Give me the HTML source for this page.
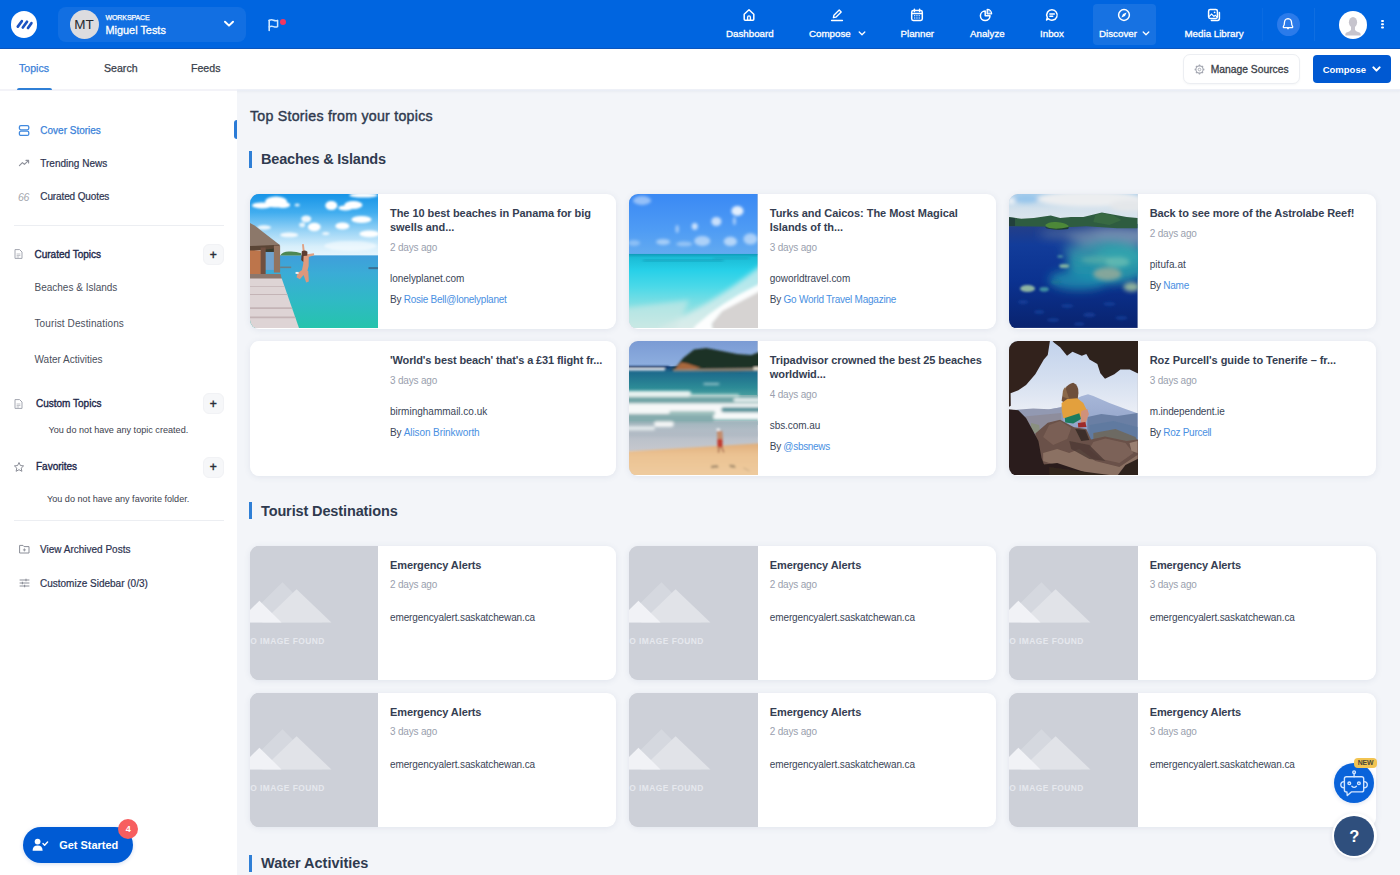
<!DOCTYPE html>
<html><head><meta charset="utf-8"><title>Discover</title>
<style>
*{box-sizing:border-box;margin:0;padding:0}
html,body{width:1400px;height:875px;overflow:hidden}
body{font-family:"Liberation Sans",sans-serif;background:#f3f5f9;color:#3a4557;position:relative;font-size:11px}
.abs{position:absolute}
#hdr{position:absolute;left:0;top:0;width:1400px;height:49px;background:#0065e0;border-bottom:1px solid #0a56bf}
#sub{position:absolute;left:0;top:49px;width:1400px;height:41px;background:#fff;box-shadow:0 1px 3px rgba(60,80,120,.10)}
#side{position:absolute;left:0;top:90px;width:237px;height:785px;background:#fff}
.t{position:absolute;white-space:nowrap;line-height:1}
.nav{color:#fff;font-size:9.75px;font-weight:normal;-webkit-text-stroke:.3px #fff}
.card{position:absolute;width:366.9px;height:134.3px;background:#fff;border-radius:9px;box-shadow:0 1px 6px rgba(70,90,130,.10);overflow:hidden}
.card .img{position:absolute;left:0;top:0;width:128.5px;height:133.9px;background:#cdd0d8;overflow:hidden}
.card .ti{position:absolute;left:140.4px;top:11.55px;white-space:nowrap;font-size:11px;letter-spacing:-.06px;font-weight:bold;line-height:14.3px;color:#353e52}
.card .ago{position:absolute;left:140.4px;letter-spacing:-.19px;font-size:10px;color:#9a9fae;line-height:1}
.card .dom{position:absolute;left:140.4px;letter-spacing:-.07px;font-size:10px;color:#3a4557;line-height:1}
.card .by{position:absolute;left:140.4px;letter-spacing:-.2px;font-size:10px;color:#3a4557;line-height:1}
.card .by a{color:#4a90e2;text-decoration:none}
.sec{position:absolute;left:249px;width:3px;height:17px;background:#2f7fd6}
.sect{position:absolute;left:261px;letter-spacing:-.16px;font-size:14.5px;font-weight:bold;color:#2f3a4f;line-height:1;white-space:nowrap}
.sb{position:absolute;white-space:nowrap;line-height:1;font-size:10.5px;color:#3a4557}
</style></head><body>
<div id="hdr"></div>
<div id="sub"></div>
<div id="side"></div>
<div id="subline" style="position:absolute;left:0;top:88.8px;width:237px;height:2.2px;background:#f3f3f8"></div><div style="position:absolute;left:237px;top:88.8px;width:1163px;height:2.4px;background:linear-gradient(#f0f2f8,#e8ecf5)"></div>
<!--HDR-->
<!-- logo -->
<div class="abs" style="left:10.5px;top:11px;width:26.5px;height:26.5px;border-radius:50%;background:#fff"></div>
<svg class="abs" style="left:10.5px;top:11px" width="26.5" height="26.5" viewBox="0 0 26.5 26.5"><g stroke="#1b52c2" stroke-width="2.7" stroke-linecap="round"><line x1="6.8" y1="15.6" x2="10.8" y2="10.2"/><line x1="11.8" y1="16.5" x2="16" y2="10.8"/><line x1="17" y1="17" x2="20.4" y2="12.2"/></g></svg>
<!-- workspace -->
<div class="abs" style="left:58px;top:7px;width:188px;height:35px;border-radius:8px;background:rgba(255,255,255,.07)"></div>
<div class="abs" style="left:69.5px;top:10px;width:29px;height:29px;border-radius:50%;background:#dcdcdf"></div>
<div class="t" style="left:69.5px;top:17.5px;width:29px;text-align:center;font-size:13.5px;color:#26292f">MT</div>
<div class="t" style="left:105.5px;top:13.5px;font-size:7px;color:#fff;letter-spacing:-.1px;-webkit-text-stroke:.25px #fff">WORKSPACE</div>
<div class="t" style="left:105.5px;top:25px;font-size:10.9px;color:#fff;-webkit-text-stroke:.3px #fff">Miguel Tests</div>
<svg class="abs" style="left:223px;top:20px" width="12" height="8" viewBox="0 0 12 8"><path d="M2 1.7 L6 5.6 L10 1.7" fill="none" stroke="#fff" stroke-width="2" stroke-linecap="round" stroke-linejoin="round"/></svg>
<!-- flag -->
<svg class="abs" style="left:267px;top:18px" width="14" height="14" viewBox="0 0 14 14"><path d="M2.2 2.2 V12.4" stroke="#cfe7ff" stroke-width="1.6" stroke-linecap="round" fill="none"/><path d="M2.2 2.4 Q4.4 1.3 6.6 2.3 Q8.8 3.3 10.6 2.4 V8.6 Q8.8 9.6 6.6 8.6 Q4.4 7.6 2.2 8.8" fill="none" stroke="#cfe7ff" stroke-width="1.5" stroke-linejoin="round" stroke-linecap="round"/></svg>
<div class="abs" style="left:280.1px;top:19.2px;width:6.2px;height:6.2px;border-radius:50%;background:#f4365f"></div>
<!-- nav highlight -->
<div class="abs" style="left:1092.5px;top:4px;width:63.5px;height:41px;border-radius:4px;background:rgba(255,255,255,.09)"></div>
<!-- nav labels -->
<div class="t nav" style="left:726px;top:29.3px">Dashboard</div>
<div class="t nav" style="left:809px;top:29.3px">Compose</div>
<div class="t nav" style="left:900.5px;top:29.3px">Planner</div>
<div class="t nav" style="left:970px;top:29.3px">Analyze</div>
<div class="t nav" style="left:1040px;top:29.3px">Inbox</div>
<div class="t nav" style="left:1099px;top:29.3px">Discover</div>
<div class="t nav" style="left:1184.5px;top:29.3px">Media Library</div>
<svg class="abs" style="left:858.2px;top:31.4px" width="8" height="5" viewBox="0 0 8 5"><path d="M1.2 1 L4 3.7 L6.8 1" fill="none" stroke="#fff" stroke-width="1.3" stroke-linecap="round" stroke-linejoin="round"/></svg>
<svg class="abs" style="left:1142.2px;top:31.4px" width="8" height="5" viewBox="0 0 8 5"><path d="M1.2 1 L4 3.7 L6.8 1" fill="none" stroke="#fff" stroke-width="1.3" stroke-linecap="round" stroke-linejoin="round"/></svg>
<!-- nav icons -->
<svg class="abs" style="left:742px;top:8px" width="14" height="14" viewBox="0 0 14 14"><path d="M2.2 6.2 L7 1.8 L11.8 6.2 V11.2 Q11.8 12.2 10.8 12.2 H3.2 Q2.2 12.2 2.2 11.2 Z" fill="none" stroke="#fff" stroke-width="1.5" stroke-linejoin="round"/><path d="M5.6 12 V9.2 Q5.6 7.9 7 7.9 Q8.4 7.9 8.4 9.2 V12" fill="none" stroke="#fff" stroke-width="1.35"/></svg>
<svg class="abs" style="left:830px;top:8px" width="14" height="14" viewBox="0 0 14 14"><path d="M3.4 9.6 L3.9 7.2 L9.2 1.9 L11.2 3.9 L5.9 9.2 Z" fill="none" stroke="#fff" stroke-width="1.35" stroke-linejoin="round"/><path d="M1.6 12.4 H12.4" stroke="#fff" stroke-width="1.5" stroke-linecap="round"/></svg>
<svg class="abs" style="left:910px;top:8px" width="14" height="14" viewBox="0 0 14 14"><rect x="1.7" y="2.6" width="10.6" height="9.8" rx="1.6" fill="none" stroke="#fff" stroke-width="1.5"/><path d="M4.4 1.2 V3.6 M9.6 1.2 V3.6 M1.8 5.6 H12.2" stroke="#fff" stroke-width="1.5" stroke-linecap="round"/><path d="M4 7.8 H10 M4 10 H10" stroke="#fff" stroke-width="1.1" stroke-dasharray="1.3 1"/></svg>
<svg class="abs" style="left:979px;top:8px" width="14" height="14" viewBox="0 0 14 14"><path d="M6.2 3 A4.8 4.8 0 1 0 11 7.8 H6.2 Z" fill="none" stroke="#fff" stroke-width="1.5" stroke-linejoin="round"/><path d="M8.2 1.4 A4.4 4.4 0 0 1 12.6 5.8 H8.2 Z" fill="#fff" fill-opacity=".35" stroke="#fff" stroke-width="1.35" stroke-linejoin="round"/></svg>
<svg class="abs" style="left:1044.5px;top:8px" width="14" height="14" viewBox="0 0 14 14"><path d="M7 1.8 A5.2 5.2 0 1 1 3.4 10.8 L1.6 12 L2.3 9.4 A5.2 5.2 0 0 1 7 1.8 Z" fill="none" stroke="#fff" stroke-width="1.5" stroke-linejoin="round"/><path d="M4.8 6 H9.4 M4.8 8.2 H7.8" stroke="#fff" stroke-width="1.35" stroke-linecap="round"/></svg>
<svg class="abs" style="left:1116.5px;top:8px" width="14" height="14" viewBox="0 0 14 14"><circle cx="7" cy="7" r="5.4" fill="none" stroke="#fff" stroke-width="1.5"/><path d="M9.6 4.4 L8 8 L4.4 9.6 L6 6 Z" fill="#fff"/></svg>
<svg class="abs" style="left:1207px;top:8px" width="14" height="14" viewBox="0 0 14 14"><rect x="1.6" y="1.6" width="8.8" height="8.8" rx="1.6" fill="none" stroke="#fff" stroke-width="1.5"/><path d="M12.4 4.4 V10.6 Q12.4 12.4 10.6 12.4 H4.4" fill="none" stroke="#fff" stroke-width="1.5" stroke-linecap="round"/><path d="M2 8.6 L4.6 6 L7 8.4 L8.2 7.2 L10 9" fill="none" stroke="#fff" stroke-width="1.1"/><circle cx="7.6" cy="4.3" r=".9" fill="#fff"/></svg>
<!-- dividers -->
<div class="abs" style="left:1262px;top:8px;width:1px;height:33px;background:rgba(255,255,255,.04)"></div>
<div class="abs" style="left:1313.5px;top:8px;width:1px;height:33px;background:rgba(255,255,255,.06)"></div>
<!-- bell -->
<div class="abs" style="left:1276.5px;top:12.5px;width:23px;height:23px;border-radius:50%;background:#2b7bea"></div>
<svg class="abs" style="left:1281px;top:17px" width="14" height="14" viewBox="0 0 14 14"><path d="M7 1.6 Q10.6 1.8 10.6 6 Q10.6 8.4 11.6 9.4 Q12 10.6 10.8 10.6 H3.2 Q2 10.6 2.4 9.4 Q3.4 8.4 3.4 6 Q3.4 1.8 7 1.6 Z" fill="none" stroke="#fff" stroke-width="1.3" stroke-linejoin="round"/><path d="M6 11 L7 12.2 L8 11" fill="#fff" stroke="#fff" stroke-width=".8" stroke-linejoin="round"/></svg>
<!-- avatar -->
<div class="abs" style="left:1338.5px;top:10.5px;width:28px;height:28px;border-radius:50%;background:#fff;overflow:hidden"><svg width="28" height="28" viewBox="0 0 28 28"><ellipse cx="14" cy="11.2" rx="4.1" ry="5.2" fill="#c6c4cd"/><path d="M12 14 H16 V19 Q17 20.4 21 21.8 Q22 23 21.6 24.6 H6.4 Q6 23 7 21.8 Q11 20.4 12 19 Z" fill="#c6c4cd"/></svg></div>
<!-- kebab -->
<div class="abs" style="left:1381.3px;top:20px;width:2.4px;height:2.4px;border-radius:50%;background:#fff;box-shadow:0 3.3px 0 #fff,0 6.6px 0 #fff"></div>
<!--/HDR-->
<!--SUB-->
<div class="t" style="left:19px;top:62.8px;font-size:10.6px;color:#3b82d9;-webkit-text-stroke:.25px #3b82d9">Topics</div>
<div class="t" style="left:104px;top:62.8px;font-size:10.6px;color:#3a3f4c;-webkit-text-stroke:.25px #3a3f4c">Search</div>
<div class="t" style="left:191px;top:62.8px;font-size:10.6px;color:#3a3f4c;-webkit-text-stroke:.25px #3a3f4c">Feeds</div>
<div class="abs" style="left:17px;top:87.6px;width:35px;height:2.3px;border-radius:2px 2px 0 0;background:#2f7fd6"></div>
<!-- manage sources -->
<div class="abs" style="left:1182.5px;top:54px;width:117.5px;height:29.5px;border:1px solid #eceef2;border-radius:7px;background:#fff;box-shadow:0 1px 2px rgba(80,90,120,.05)"></div>
<svg class="abs" style="left:1194.4px;top:63.6px" width="11" height="11" viewBox="0 0 11 11"><circle cx="5.5" cy="5.5" r="3.6" fill="none" stroke="#a5a8b2" stroke-width="1.1"/><circle cx="5.5" cy="5.5" r="1.3" fill="none" stroke="#a5a8b2" stroke-width=".9"/><g stroke="#a5a8b2" stroke-width="1.3"><path d="M5.5 .6V2 M5.5 9V10.4 M.6 5.5H2 M9 5.5H10.4 M2 2L3 3 M8 8L9 9 M2 9L3 8 M8 3L9 2"/></g></svg>
<div class="t" style="left:1210.8px;top:64.7px;font-size:10.3px;color:#3a3e48;-webkit-text-stroke:.3px #3a3e48">Manage Sources</div>
<!-- compose btn -->
<div class="abs" style="left:1312.6px;top:55.2px;width:78px;height:28px;border-radius:4px;background:#0059d2"></div>
<div class="t" style="left:1322.7px;top:64.9px;font-size:9.5px;color:#fff;font-weight:bold">Compose</div>
<svg class="abs" style="left:1372.2px;top:66.2px" width="9" height="6.5" viewBox="0 0 9 6.5"><path d="M1.4 1.4 L4.5 4.6 L7.6 1.4" fill="none" stroke="#fff" stroke-width="2" stroke-linecap="round" stroke-linejoin="round"/></svg>
<!--/SUB-->
<!--SIDE-->
<!-- active bar -->
<div class="abs" style="left:234.2px;top:119.8px;width:2.9px;height:19.2px;border-radius:3px 0 0 3px;background:#2a7bd6"></div>
<!-- cover stories -->
<svg class="abs" style="left:17.5px;top:124px" width="13" height="13" viewBox="0 0 13 13"><rect x="1.4" y="1.6" width="9.4" height="4.2" rx="1.5" fill="none" stroke="#4189de" stroke-width="1.3"/><rect x="1.4" y="7.2" width="9.4" height="4.2" rx="1.5" fill="none" stroke="#4189de" stroke-width="1.3"/></svg>
<div class="sb" style="left:40.3px;top:125.5px;font-size:10px;color:#3b82d9;-webkit-text-stroke:.25px #3b82d9">Cover Stories</div>
<!-- trending -->
<svg class="abs" style="left:17.5px;top:157px" width="13" height="13" viewBox="0 0 13 13"><path d="M1.4 8.6 L4.4 5.6 L6.4 7.4 L10.4 3.6" fill="none" stroke="#8b8e98" stroke-width="1.1" stroke-linecap="round" stroke-linejoin="round"/><path d="M8 3.4 H10.6 V6" fill="none" stroke="#8b8e98" stroke-width="1.1" stroke-linecap="round" stroke-linejoin="round"/></svg>
<div class="sb" style="left:40.3px;top:159px;font-size:10px;color:#2d3350;-webkit-text-stroke:.2px #2d3350">Trending News</div>
<!-- quotes -->
<div class="sb" style="left:18px;top:191.5px;font-size:10.5px;color:#a4a6ad;letter-spacing:-.4px;font-style:italic">66</div>
<div class="sb" style="left:40.3px;top:191.9px;font-size:10px;letter-spacing:-.12px;color:#2d3350;-webkit-text-stroke:.2px #2d3350">Curated Quotes</div>
<div class="abs" style="left:14px;top:224.5px;width:210px;height:1px;background:#eceef2"></div>
<!-- curated topics -->
<svg class="abs" style="left:13px;top:248px" width="11" height="12" viewBox="0 0 11 12"><path d="M2 1.6 H6.6 L9 4 V10.4 H2 Z" fill="none" stroke="#a3a6b0" stroke-width="1" stroke-linejoin="round"/><path d="M3.6 6 H7.4 M3.6 7.6 H7.4 M3.6 9 H6" stroke="#a3a6b0" stroke-width=".7"/></svg>
<div class="sb" style="left:34.5px;top:250px;font-size:10px;color:#1d274a;-webkit-text-stroke:.35px #1d274a">Curated Topics</div>
<div class="abs" style="left:202.5px;top:244px;width:21.5px;height:21px;border-radius:6px;background:#f6f7f9;border:1px solid #f1f2f5"></div>
<div class="sb" style="left:202.5px;top:248.5px;width:21.5px;text-align:center;font-size:12px;color:#2a2e3a;-webkit-text-stroke:.45px #2a2e3a">+</div>
<div class="sb" style="left:34.5px;top:282.5px;font-size:10px;color:#4b4f5c">Beaches &amp; Islands</div>
<div class="sb" style="left:34.5px;top:318.5px;font-size:10px;letter-spacing:.11px;color:#4b4f5c">Tourist Destinations</div>
<div class="sb" style="left:34.5px;top:355px;font-size:10px;color:#4b4f5c">Water Activities</div>
<!-- custom topics -->
<svg class="abs" style="left:13px;top:397.5px" width="11" height="12" viewBox="0 0 11 12"><path d="M2 1.6 H6.6 L9 4 V10.4 H2 Z" fill="none" stroke="#a3a6b0" stroke-width="1" stroke-linejoin="round"/><path d="M3.6 6 H7.4 M3.6 7.6 H7.4 M3.6 9 H6" stroke="#a3a6b0" stroke-width=".7"/></svg>
<div class="sb" style="left:36px;top:398.7px;font-size:10px;color:#1d274a;-webkit-text-stroke:.35px #1d274a">Custom Topics</div>
<div class="abs" style="left:202.5px;top:393px;width:21.5px;height:21px;border-radius:6px;background:#f6f7f9;border:1px solid #f1f2f5"></div>
<div class="sb" style="left:202.5px;top:397.5px;width:21.5px;text-align:center;font-size:12px;color:#2a2e3a;-webkit-text-stroke:.45px #2a2e3a">+</div>
<div class="sb" style="left:48.5px;top:425.5px;font-size:9.1px;color:#3d414d">You do not have any topic created.</div>
<!-- favorites -->
<svg class="abs" style="left:12.5px;top:460.5px" width="12" height="12" viewBox="0 0 12 12"><path d="M6 1.5 L7.4 4.5 L10.6 4.9 L8.2 7.1 L8.9 10.3 L6 8.7 L3.1 10.3 L3.8 7.1 L1.4 4.9 L4.6 4.5 Z" fill="none" stroke="#8b8e98" stroke-width="1" stroke-linejoin="round"/></svg>
<div class="sb" style="left:36px;top:462px;font-size:10px;color:#1d274a;-webkit-text-stroke:.35px #1d274a">Favorites</div>
<div class="abs" style="left:202.5px;top:456.5px;width:21.5px;height:21px;border-radius:6px;background:#f6f7f9;border:1px solid #f1f2f5"></div>
<div class="sb" style="left:202.5px;top:461px;width:21.5px;text-align:center;font-size:12px;color:#2a2e3a;-webkit-text-stroke:.45px #2a2e3a">+</div>
<div class="sb" style="left:47px;top:495px;font-size:9.1px;color:#3d414d">You do not have any favorite folder.</div>
<div class="abs" style="left:14px;top:519.5px;width:210px;height:1px;background:#eceef2"></div>
<!-- archived -->
<svg class="abs" style="left:17.5px;top:543px" width="13" height="12" viewBox="0 0 13 12"><path d="M1.6 2.4 H5 L6 3.6 H11 V10 H1.6 Z" fill="none" stroke="#8b8e98" stroke-width="1" stroke-linejoin="round"/><path d="M6.4 5.4 V8.4 M4.9 6.9 H7.9" stroke="#8b8e98" stroke-width=".9"/></svg>
<div class="sb" style="left:40px;top:544.7px;font-size:10px;color:#2d3350;-webkit-text-stroke:.2px #2d3350">View Archived Posts</div>
<svg class="abs" style="left:17.5px;top:577px" width="13" height="12" viewBox="0 0 13 12"><path d="M1.6 3 H11.4 M1.6 6 H11.4 M1.6 9 H11.4" stroke="#8b8e98" stroke-width="1"/><path d="M8 1.8 V4.2 M4.4 4.8 V7.2 M6.6 7.8 V10.2" stroke="#8b8e98" stroke-width="1.1"/></svg>
<div class="sb" style="left:40px;top:578.6px;font-size:10px;color:#2d3350;-webkit-text-stroke:.2px #2d3350">Customize Sidebar (0/3)</div>
<!-- get started -->
<div class="abs" style="left:23px;top:826.5px;width:110px;height:36.5px;border-radius:19px;background:#005bd4;box-shadow:0 1px 4px rgba(0,70,180,.18)"></div>
<svg class="abs" style="left:32px;top:837.5px" width="17" height="14" viewBox="0 0 17 14"><circle cx="5.6" cy="3.6" r="2.9" fill="#fff"/><path d="M.6 12.8 Q.6 7.6 5.6 7.6 Q10.6 7.6 10.6 12.8 Z" fill="#fff"/><path d="M11 5.6 L12.6 7.2 L15.6 4" fill="none" stroke="#fff" stroke-width="1.4" stroke-linecap="round" stroke-linejoin="round"/></svg>
<div class="t" style="left:59.2px;top:840px;font-size:10.95px;color:#fff;font-weight:bold">Get Started</div>
<div class="abs" style="left:118.3px;top:819.3px;width:20px;height:20px;border-radius:50%;background:#f75e5f"></div>
<div class="t" style="left:118.3px;top:825px;width:20px;text-align:center;font-size:9px;color:#fff;font-weight:bold">4</div>
<!--/SIDE-->
<!--MAIN-->
<div class="t" style="left:250px;top:108.6px;font-size:14.2px;letter-spacing:.25px;color:#2f3a4f;-webkit-text-stroke:.4px #2f3a4f">Top Stories from your topics</div>
<div class="sec" style="top:150.7px"></div><div class="sect" style="top:152.2px;letter-spacing:0"><span style="letter-spacing:-0.192px">Beaches &amp; Islands</span></div>
<div class="sec" style="top:502.4px"></div><div class="sect" style="top:503.9px;letter-spacing:0"><span style="letter-spacing:-0.125px">Tourist Destinations</span></div>
<div class="sec" style="top:854.5px"></div><div class="sect" style="top:856px;letter-spacing:0"><span style="letter-spacing:-0.020px">Water Activities</span></div>
<div class="card" style="left:249.6px;top:194.3px"><div class="img"><svg width="128.5" height="133.9" style="display:block" viewBox="0 0 128 134" preserveAspectRatio="none"><defs><linearGradient id="a1" x1="0" y1="0" x2="0" y2="1"><stop offset="0" stop-color="#1694e7"/><stop offset=".3" stop-color="#41adef"/><stop offset=".6" stop-color="#9ad4f6"/><stop offset=".85" stop-color="#d8effb"/><stop offset="1" stop-color="#e6f5fd"/></linearGradient><linearGradient id="a2" x1="0" y1="0" x2="0" y2="1"><stop offset="0" stop-color="#3f9edb"/><stop offset=".25" stop-color="#3aacd6"/><stop offset=".6" stop-color="#30b9c6"/><stop offset="1" stop-color="#25c4ac"/></linearGradient><filter id="b1" x="-10%" y="-10%" width="120%" height="120%"><feGaussianBlur stdDeviation="1.1"/></filter><filter id="b1s" x="-10%" y="-10%" width="120%" height="120%"><feGaussianBlur stdDeviation=".45"/></filter></defs><rect width="128" height="62" fill="url(#a1)"/><rect y="61.4" width="128" height="73" fill="url(#a2)"/><g fill="#fff" filter="url(#b1)"><ellipse cx="26" cy="8" rx="11" ry="5.5"/><ellipse cx="12" cy="11.5" rx="10" ry="3"/><ellipse cx="33" cy="11" rx="7" ry="3"/><ellipse cx="47" cy="11" rx="2.6" ry="1.6" opacity=".8"/><ellipse cx="81" cy="11.5" rx="6" ry="4.6"/><ellipse cx="103" cy="11" rx="9" ry="4"/><ellipse cx="95" cy="14" rx="7" ry="2.4"/><ellipse cx="113" cy="1.2" rx="14" ry="2.4"/><ellipse cx="56" cy="25" rx="5" ry="3.4" opacity=".9"/><ellipse cx="52" cy="31" rx="3" ry="2.4" opacity=".8"/><ellipse cx="64" cy="33" rx="6.4" ry="4.2"/><ellipse cx="92" cy="32" rx="7" ry="3.6"/><ellipse cx="111" cy="25.5" rx="10" ry="3.6"/><ellipse cx="119" cy="40" rx="10" ry="3.4"/><ellipse cx="39" cy="41" rx="9" ry="2.4" opacity=".85"/><ellipse cx="14" cy="33.5" rx="7" ry="2.2" opacity=".85"/><ellipse cx="75.5" cy="39.6" rx="3.6" ry="1.6" opacity=".8"/><ellipse cx="100" cy="52" rx="26" ry="5" opacity=".5"/></g><g filter="url(#b1s)"><path d="M30 61.6 Q33 57 40 57.6 Q46 57.4 51 59.4 L51 61.6Z" fill="#4d8753"/><rect x="118" y="73.2" width="10" height="2" fill="#3b6f93"/><rect x="15" y="54" width="10" height="22" fill="#6fa3cf"/><rect x="15" y="52" width="10" height="6" fill="#3b3a2c"/><path d="M0 29 L4.6 31.6 L29.4 50.8 L29.4 53.6 L0 56Z" fill="#8c786a"/><path d="M0 52 L29.4 50.8 L29.4 53.8 L0 57.5Z" fill="#5a4536"/><rect x="0" y="56.5" width="11" height="27" fill="#bd744c"/><rect x="10.6" y="53.5" width="5" height="27" fill="#6f503f"/><rect x="23.8" y="51.6" width="6.2" height="27" fill="#93735f"/><path d="M0 80 H30.5 L31.6 85 H0Z" fill="#8b776d"/><rect x="30" y="72.6" width="11" height="1.6" fill="#6a7f88"/><path d="M0 84.5 H31.6 L48.8 134 H0Z" fill="#ded4d5"/><path d="M0 113.4 H41.6 L42.2 115 H0Z M0 122.6 H44.8 L45.4 124.4 H0Z M0 100 H37 L37.4 101 H0Z M0 92 H34.2 L34.5 92.8 H0Z" fill="#c4b4b6"/><path d="M51.8 50.4 L53.6 50 L54.6 58 L52.6 58.6Z" fill="#e0a184"/><path d="M56.6 60.4 L63.6 59.4 L64 61.2 L57.4 63.4Z" fill="#e0a184"/><path d="M51.6 57.4 Q54.6 55.6 57.2 57.8 L57 64 L53.4 68.4 L51 66Z" fill="#5d3d30"/><path d="M53.4 62 L58.6 61.6 L58.4 72 L57 77.6 L51.6 77 L53 70Z" fill="#de9b7e"/><path d="M52 76 L58 77 L58.6 87.6 L56 88.6 L53.4 81 L49.6 85.4 L46.4 83.4 L47.4 79Z" fill="#dc977c"/><rect x="45.4" y="78" width="3" height="2" fill="#f1eeee"/></g></svg></div><div class="ti" style="letter-spacing:0"><span style="letter-spacing:-0.055px">The 10 best beaches in Panama for big</span><br><span style="letter-spacing:-0.039px">swells and...</span></div><div class="ago" style="top:48.6px">2 days ago</div><div class="dom" style="top:80.1px;letter-spacing:0"><span style="letter-spacing:-0.047px">lonelyplanet.com</span></div><div class="by" style="top:100.6px;letter-spacing:0"><span style="letter-spacing:-0.246px">By <a>Rosie Bell@lonelyplanet</a></span></div></div>
<div class="card" style="left:629.4px;top:194.3px"><div class="img"><svg width="128.5" height="133.9" style="display:block" viewBox="0 0 128 134" preserveAspectRatio="none"><defs><linearGradient id="c1" x1="0" y1="0" x2="0" y2="1"><stop offset="0" stop-color="#3a89f4"/><stop offset=".6" stop-color="#4f9cf4"/><stop offset="1" stop-color="#64abf0"/></linearGradient><linearGradient id="c2" x1="0" y1="0" x2="0" y2="1"><stop offset="0" stop-color="#0f9ab8"/><stop offset=".05" stop-color="#1bbcd6"/><stop offset=".22" stop-color="#27d0e8"/><stop offset=".45" stop-color="#4cd9e8"/><stop offset=".75" stop-color="#8fe0e2"/><stop offset="1" stop-color="#bfe6e2"/></linearGradient><filter id="d1" x="-10%" y="-10%" width="120%" height="120%"><feGaussianBlur stdDeviation="1.5"/></filter><filter id="d2" x="-10%" y="-10%" width="120%" height="120%"><feGaussianBlur stdDeviation="2.6"/></filter></defs><rect width="128" height="61" fill="url(#c1)"/><rect y="60" width="128" height="74" fill="url(#c2)"/><g fill="#fff" filter="url(#d1)"><ellipse cx="108" cy="17" rx="6" ry="5" opacity=".85"/><ellipse cx="105" cy="27" rx="1.6" ry="4" opacity=".5"/><ellipse cx="87" cy="27.5" rx="5" ry="4.6" opacity=".7"/><ellipse cx="65.5" cy="32.5" rx="3" ry="3.4" opacity=".7"/><ellipse cx="48" cy="35" rx="1.6" ry="4" opacity=".5"/><ellipse cx="13" cy="6.5" rx="9" ry="4.4" opacity=".45"/><ellipse cx="34" cy="48" rx="7" ry="3" opacity=".45"/><ellipse cx="73" cy="47" rx="8" ry="5" opacity=".5"/><ellipse cx="101" cy="47.5" rx="6.6" ry="4.6" opacity=".55"/><ellipse cx="121" cy="45" rx="7" ry="5.6" opacity=".5"/><ellipse cx="55" cy="50" rx="8" ry="2.4" opacity=".35"/><ellipse cx="5" cy="49" rx="6" ry="3" opacity=".3"/></g><rect x="14" y="65.8" width="80" height="1.6" rx=".8" fill="#168aa4" filter="url(#d1)" opacity=".8"/><rect x="84" y="63.6" width="36" height="1.4" fill="#1590aa" filter="url(#d1)" opacity=".7"/><g filter="url(#d2)"><path d="M128 74 L150 60 L150 150 L30 150 L30 134 Q80 112 128 74Z" fill="#e6f0ee" opacity=".7"/><path d="M-20 116 L60 106 L40 150 L-20 150Z" fill="#cfe9e6" opacity=".6"/></g><g filter="url(#d1)"><path d="M128 91 L145 82 L145 100 L92 118 L82 130 L85 145 L58 145 L66 132 Q92 108 128 91Z" fill="#fff" opacity=".95"/><path d="M128 98.6 L145 90 L145 150 L86 150 L82.6 129.6 L93 117Z" fill="#d6d3d2"/></g></svg></div><div class="ti" style="letter-spacing:0"><span style="letter-spacing:-0.035px">Turks and Caicos: The Most Magical</span><br><span style="letter-spacing:-0.047px">Islands of th...</span></div><div class="ago" style="top:48.6px">3 days ago</div><div class="dom" style="top:80.1px;letter-spacing:0"><span style="letter-spacing:-0.044px">goworldtravel.com</span></div><div class="by" style="top:100.6px;letter-spacing:0"><span style="letter-spacing:-0.235px">By <a>Go World Travel Magazine</a></span></div></div>
<div class="card" style="left:1009.3px;top:194.3px"><div class="img"><svg width="128.5" height="133.9" style="display:block" viewBox="0 0 128 134" preserveAspectRatio="none"><defs><linearGradient id="e1" x1="0" y1="0" x2="0" y2="1"><stop offset="0" stop-color="#a9cdea"/><stop offset=".5" stop-color="#d3e1ec"/><stop offset="1" stop-color="#dfe7ee"/></linearGradient><linearGradient id="e2" x1="0" y1="0" x2="0" y2="1"><stop offset="0" stop-color="#263f86"/><stop offset=".2" stop-color="#123c9a"/><stop offset=".55" stop-color="#0b3290"/><stop offset="1" stop-color="#09236f"/></linearGradient><filter id="f0" x="-20%" y="-20%" width="140%" height="140%"><feGaussianBlur stdDeviation=".45"/></filter><filter id="f1" x="-20%" y="-20%" width="140%" height="140%"><feGaussianBlur stdDeviation="1"/></filter><filter id="f2" x="-20%" y="-20%" width="140%" height="140%"><feGaussianBlur stdDeviation="5"/></filter><filter id="f3" x="-20%" y="-20%" width="140%" height="140%"><feGaussianBlur stdDeviation="2.2"/></filter></defs><rect width="128" height="30" fill="url(#e1)"/><g filter="url(#f3)"><ellipse cx="80" cy="5" rx="52" ry="8" fill="#eceef0"/><ellipse cx="120" cy="12" rx="20" ry="6" fill="#e4e7ea"/><ellipse cx="17" cy="5" rx="12" ry="4" fill="#8fc2ec" opacity=".8"/><ellipse cx="2" cy="7" rx="4" ry="3" fill="#f4f6f8"/></g><rect y="30" width="128" height="104" fill="url(#e2)"/><g filter="url(#f2)"><ellipse cx="105" cy="42" rx="48" ry="9" fill="#7c93b4" opacity=".9"/><ellipse cx="60" cy="40" rx="30" ry="5" fill="#54709f" opacity=".7"/><ellipse cx="100" cy="68" rx="42" ry="22" fill="#2792a8"/><ellipse cx="75" cy="56" rx="22" ry="7" fill="#3a8aa8" opacity=".7"/><ellipse cx="70" cy="86" rx="30" ry="10" fill="#1f8eae" opacity=".85"/><ellipse cx="110" cy="62" rx="24" ry="10" fill="#36a8ae" opacity=".8"/></g><g filter="url(#f3)"><ellipse cx="98" cy="80" rx="14" ry="6.6" fill="#8fa89a" opacity=".9"/><ellipse cx="88" cy="66" rx="16" ry="4" fill="#5fb0a8" opacity=".6"/><ellipse cx="122" cy="93" rx="8" ry="4.6" fill="#8db09c"/><ellipse cx="108" cy="68" rx="12" ry="5" fill="#6fc0b4" opacity=".7"/></g><g filter="url(#f1)"><ellipse cx="18.5" cy="94.6" rx="7.4" ry="3.6" fill="#8fb5a2"/><ellipse cx="35" cy="95.4" rx="4.6" ry="2.4" fill="#3f8ea2"/><ellipse cx="55" cy="72" rx="5" ry="2" fill="#7fb0a0"/><ellipse cx="51" cy="62.6" rx="3" ry="1.2" fill="#5aa6a8" opacity=".8"/><ellipse cx="47" cy="88" rx="5" ry="2" fill="#1c7496" opacity=".7"/><g fill="#1d4aa6" opacity=".55"><ellipse cx="30" cy="118" rx="5" ry="2"/><ellipse cx="58" cy="112" rx="6" ry="2"/><ellipse cx="80" cy="121" rx="6" ry="2.4"/><ellipse cx="100" cy="110" rx="6" ry="2"/><ellipse cx="112" cy="124" rx="6" ry="2"/><ellipse cx="44" cy="126" rx="6" ry="2"/><ellipse cx="14" cy="108" rx="5" ry="2"/><ellipse cx="70" cy="130" rx="5" ry="1.6"/></g></g><g filter="url(#f0)"><path d="M0 23.1 L12.3 24.7 L24.7 23.9 L41.6 21.6 L50.9 23.9 L61.7 23.1 L74 23.1 L86.4 20 L92.5 18.5 L104.9 20.8 L117.2 23.1 L128 23.9 L128 34.4 L108 34.2 L77 32.4 L62 33 L0 32.2Z" fill="#2f5c40"/><path d="M86 21 L92.5 19 L104 21.4 L112 26 L100 31 L84 28Z" fill="#3c7044" opacity=".7"/><path d="M0 23.4 L6 24 L6 32 L0 32Z" fill="#21403a"/><path d="M36 31 Q40 27.4 47 28 Q56 28.4 59.6 32 Q58 35.4 46 35.2 Q38 35 36 31Z" fill="#4d8838"/><path d="M36 33 Q46 36.4 59.6 33 L59 35 Q46 36.6 37 34.4Z" fill="#1d3a32"/></g></svg></div><div class="ti" style="letter-spacing:0"><span style="letter-spacing:-0.088px">Back to see more of the Astrolabe Reef!</span></div><div class="ago" style="top:34.5px">2 days ago</div><div class="dom" style="top:66px;letter-spacing:0"><span style="letter-spacing:0.067px">pitufa.at</span></div><div class="by" style="top:86.5px;letter-spacing:0"><span style="letter-spacing:-0.261px">By <a>Name</a></span></div></div>
<div class="card" style="left:249.6px;top:341.25px"><div class="ti" style="letter-spacing:0"><span style="letter-spacing:-0.117px">'World's best beach' that's a £31 flight fr...</span></div><div class="ago" style="top:34.5px">3 days ago</div><div class="dom" style="top:66px;letter-spacing:0"><span style="letter-spacing:0.002px">birminghammail.co.uk</span></div><div class="by" style="top:86.5px;letter-spacing:0"><span style="letter-spacing:-0.078px">By <a>Alison Brinkworth</a></span></div></div>
<div class="card" style="left:629.4px;top:341.25px"><div class="img"><svg width="128.5" height="133.9" style="display:block" viewBox="0 0 128 134" preserveAspectRatio="none"><defs><linearGradient id="g1" x1="0" y1="0" x2="0" y2="1"><stop offset="0" stop-color="#7b9bd4"/><stop offset="1" stop-color="#8fb0e0"/></linearGradient><linearGradient id="g2" x1="0" y1="0" x2="0" y2="1"><stop offset="0" stop-color="#174478"/><stop offset=".2" stop-color="#1d6a8c"/><stop offset=".7" stop-color="#2c8a96"/><stop offset="1" stop-color="#4aa0a0"/></linearGradient><linearGradient id="g3" x1="0" y1="0" x2="0" y2="1"><stop offset="0" stop-color="#9fb4bc"/><stop offset=".4" stop-color="#b6bec8"/><stop offset="1" stop-color="#c6c8ce"/></linearGradient><linearGradient id="g4" x1="0" y1="0" x2="0" y2="1"><stop offset="0" stop-color="#dfae7c"/><stop offset=".3" stop-color="#ebc292"/><stop offset="1" stop-color="#efcea2"/></linearGradient><filter id="h1" x="-20%" y="-20%" width="140%" height="140%"><feGaussianBlur stdDeviation=".8"/></filter><filter id="h2" x="-20%" y="-20%" width="140%" height="140%"><feGaussianBlur stdDeviation="1.8"/></filter></defs><rect width="128" height="27" fill="url(#g1)"/><rect y="25.4" width="128" height="30" fill="url(#g2)"/><rect y="54" width="128" height="30" fill="#7fb0b0"/><rect y="80" width="128" height="30" fill="url(#g3)"/><g filter="url(#h2)"><rect x="-10" y="50" width="72" height="6" rx="3" fill="#e8f2f0"/><rect x="60" y="53" width="50" height="3.4" rx="1.7" fill="#bfdcd8" opacity=".9"/><rect x="-10" y="56" width="150" height="6.6" fill="#6fa4a6"/><rect x="104" y="57.4" width="34" height="3.4" rx="1.7" fill="#eef4f4"/><rect x="-10" y="62.4" width="150" height="11.6" fill="#f6f8f8"/><rect x="92" y="66.4" width="46" height="5" rx="2" fill="#4f9098"/><rect x="-10" y="73" width="94" height="8" fill="#86acae"/><rect x="84" y="72.6" width="54" height="6" rx="2" fill="#f7f9f9"/><rect x="40" y="70" width="46" height="4" rx="2" fill="#9fc0be"/><rect x="25" y="80.6" width="19.6" height="5.4" rx="2.4" fill="#f4f6f6"/><rect x="-10" y="85.4" width="36" height="4" rx="2" fill="#e4eaec"/><rect x="-10" y="90" width="150" height="6" fill="#aeb8c2" opacity=".6"/><rect x="74" y="42" width="16" height="2" rx="1" fill="#cfe4e2" opacity=".7"/></g><g filter="url(#h1)"><rect x="-4" y="27" width="40" height="2.6" rx="1.3" fill="#dfe8ee"/><rect x="-4" y="25" width="44" height="2" fill="#123a70"/><path d="M41.6 28.5 L47.8 24.7 L54 17 L64.8 8.5 L77 7 L92.5 10 L108 13 L121.8 13.9 L132 10 L132 29.6 L108 30.2 L77 30.2 L51 29.6Z" fill="#1f3226"/><path d="M47.8 25.4 L52 21.6 L58 22.4 L64 24.4 L72 27 L62 28.8 L46 28.6Z" fill="#a8683c"/><path d="M44 28.2 L132 27 L132 30 L44 30.4Z" fill="#9f9284" opacity=".85"/><rect x="124" y="26" width="8" height="3.4" fill="#e4dccc"/><path d="M-4 110.6 L132 102.4 L132 140 L-4 140Z" fill="url(#g4)"/><path d="M82 125 l6 -.6 l1 2 l-7 .6z M100 124 l5 .4 l1 2.4 l-5 -.6z M114 127 l6 3" fill="#9a8468" stroke="#9a8468" stroke-width=".6" opacity=".8"/><rect x="87.2" y="87.6" width="3.4" height="2.2" fill="#f4f4f4"/><path d="M87.6 90 L93 90 L93.6 98.4 L88 98.4Z" fill="#c48c6c"/><path d="M88 98 L93 98 L93.4 106.6 L88 106.6Z" fill="#c23a2e"/><path d="M88.6 106.4 L90.6 106.4 L90 111.8 L88.4 111.8Z M91.4 106.4 L93 106.4 L95.2 111 L93.8 111.8Z" fill="#b07858"/></g></svg></div><div class="ti" style="letter-spacing:0"><span style="letter-spacing:-0.082px">Tripadvisor crowned the best 25 beaches</span><br><span style="letter-spacing:-0.086px">worldwid...</span></div><div class="ago" style="top:48.6px">4 days ago</div><div class="dom" style="top:80.1px;letter-spacing:0"><span style="letter-spacing:-0.074px">sbs.com.au</span></div><div class="by" style="top:100.6px;letter-spacing:0"><span style="letter-spacing:-0.301px">By <a>@sbsnews</a></span></div></div>
<div class="card" style="left:1009.3px;top:341.25px"><div class="img"><svg width="128.5" height="133.9" style="display:block" viewBox="0 0 128 134" preserveAspectRatio="none"><defs><linearGradient id="i1" x1="0" y1="0" x2="0" y2="1"><stop offset="0" stop-color="#c2d2ec"/><stop offset=".3" stop-color="#d6e0f0"/><stop offset=".55" stop-color="#eceff6"/><stop offset="1" stop-color="#eef0f6"/></linearGradient><linearGradient id="i2" x1="0" y1="0" x2="0" y2="1"><stop offset="0" stop-color="#a7b6d8"/><stop offset="1" stop-color="#8c9ec4"/></linearGradient><filter id="j1" x="-20%" y="-20%" width="140%" height="140%"><feGaussianBlur stdDeviation=".7"/></filter><filter id="j2" x="-20%" y="-20%" width="140%" height="140%"><feGaussianBlur stdDeviation="2"/></filter></defs><rect width="128" height="134" fill="url(#i1)"/><g filter="url(#j1)"><path d="M78.7 53.2 L84 55 L100 62 L116 68 L128 72.4 L128 100 L20 100 L20 72 L40 68.6 L51 66.3 L62 60 L72 55.4Z" fill="url(#i2)"/><path d="M4 69 L24 67.6 L40 68.4 L54 66 L54 96 L4 96Z" fill="#9299b2"/><path d="M10 76 L52 72 L52 96 L10 96Z" fill="#8d8a96" opacity=".8"/><path d="M78 76 L92 73 L108 75 L128 72 L128 100 L78 100Z" fill="#6a7fa4"/><path d="M80 84 L104 80 L128 86 L128 100 L80 100Z" fill="#5f7aa0" opacity=".9"/><path d="M84 92 L106 88 L126 96 L128 100 L84 100Z" fill="#6d6a64"/><path d="M22 82 L30 84 L31 92 L22 92Z" fill="#8a9080"/></g><g filter="url(#j1)"><path d="M26.2 92.5 L38.6 81.7 L50.9 78.7 L64.8 86.4 L77 88 L81.7 98.7 L95.6 95.6 L117.2 100.2 L132 98 L132 140 L26 140Z" fill="#6a5148"/><path d="M40 84 L51 80 L62 87 L58 98 L44 104 L34 96Z" fill="#7a5f54"/><path d="M84 101 L96 97.6 L116 102 L124 112 L110 122 L92 118 L80 108Z" fill="#7c6258"/><path d="M34 112 L48 108 L60 112 L70 108 L86 120 L110 126 L128 114 L128 120 L112 134 L60 134 L46 124 L34 120Z" fill="#8f7466" opacity=".9"/><path d="M120 102 L128 100 L128 112 L122 110Z" fill="#9a8072"/><path d="M60 100 L80 104 L96 120 L80 118 L62 108Z" fill="#4c3a34" opacity=".8"/><path d="M66 88 L76 89 L80 99 L72 100Z" fill="#3c2e2a"/><path d="M30 124 L48 122 L78 132 L78 140 L30 140Z" fill="#2a1e1c"/><path d="M116 124 L132 116 L132 140 L104 140Z" fill="#2f221f"/><path d="M40 126 L100 134 L100 140 L40 140Z" fill="#33251f"/><path d="M-4 67.9 L9.3 69.4 L17 77 L23 88 L29.3 100.2 L32.4 117.2 L41 140 L-4 140Z" fill="#2a1e1c"/><path d="M-4 -4 L41.4 -4 L38.6 13.9 L34.7 18.5 L26.2 33.2 L17 44 L9.3 49.4 L1.6 52.4 L1.8 64.8 L-4 68Z" fill="#33241f"/><path d="M40 -4 L132 -4 L132 32.8 L128 32.4 L120.3 28.5 L111 28.5 L104.9 33.2 L95.6 37.8 L91 32.4 L88 23 L80.2 18.5 L77 13 L72.5 14.7 L63.2 10.8 L57.8 14.7 L50.9 6.2 L44.7 1.5Z" fill="#2e201c"/><path d="M52.4 60 Q54 44 64 41.8 Q69.6 44 69.2 52 L68 61 L60 64Z" fill="#6e4f3a"/><path d="M52.4 62 L58 58 L68 57.4 L74 62 L77.4 69 L72.6 71.6 L71.4 76.6 L54 77 L52.6 70Z" fill="#e3a03c"/><path d="M55.6 77 L70 72.4 L71.8 78 L64 82.6 L56 81.6Z" fill="#1f7c5e"/><path d="M72 70 L78 68 L79.6 73 L76 83 L71.4 82Z" fill="#d0917a"/><path d="M68.6 82 L76 81 L77.2 86 L69 86.6Z" fill="#9e2a2a"/><path d="M54 56 Q52 50 56 46 L60 58Z" fill="#8a6848"/></g></svg></div><div class="ti" style="letter-spacing:0"><span style="letter-spacing:-0.050px">Roz Purcell's guide to Tenerife – fr...</span></div><div class="ago" style="top:34.5px">3 days ago</div><div class="dom" style="top:66px;letter-spacing:0"><span style="letter-spacing:-0.108px">m.independent.ie</span></div><div class="by" style="top:86.5px;letter-spacing:0"><span style="letter-spacing:-0.284px">By <a>Roz Purcell</a></span></div></div>
<div class="card" style="left:249.6px;top:546.1px"><div class="img"><svg width="128.5" height="133.9" style="display:block" viewBox="0 0 128 134" preserveAspectRatio="none"><rect width="128" height="134" fill="#cdd0d8"/><g transform="translate(0,.7)"><path d="M32.3 35.7 L72 75.8 L-8 75.8Z" fill="#d5d8df"/><path d="M46.4 42.7 L81.1 75.8 L12 75.8Z" fill="#e1e3e8"/><path d="M9.4 54 L31.4 75.8 L-12.6 75.8Z" fill="#f1f2f6"/></g><text x="-6.3" y="97.7" font-family="Liberation Sans, sans-serif" font-weight="bold" font-size="8.4" letter-spacing=".45" fill="#e6e8ee">NO IMAGE FOUND</text></svg></div><div class="ti" style="letter-spacing:0"><span style="letter-spacing:-0.109px">Emergency Alerts</span></div><div class="ago" style="top:34.4px">2 days ago</div><div class="dom" style="top:67.1px;letter-spacing:0"><span style="letter-spacing:-0.111px">emergencyalert.saskatchewan.ca</span></div></div>
<div class="card" style="left:629.4px;top:546.1px"><div class="img"><svg width="128.5" height="133.9" style="display:block" viewBox="0 0 128 134" preserveAspectRatio="none"><rect width="128" height="134" fill="#cdd0d8"/><g transform="translate(0,.7)"><path d="M32.3 35.7 L72 75.8 L-8 75.8Z" fill="#d5d8df"/><path d="M46.4 42.7 L81.1 75.8 L12 75.8Z" fill="#e1e3e8"/><path d="M9.4 54 L31.4 75.8 L-12.6 75.8Z" fill="#f1f2f6"/></g><text x="-6.3" y="97.7" font-family="Liberation Sans, sans-serif" font-weight="bold" font-size="8.4" letter-spacing=".45" fill="#e6e8ee">NO IMAGE FOUND</text></svg></div><div class="ti" style="letter-spacing:0"><span style="letter-spacing:-0.109px">Emergency Alerts</span></div><div class="ago" style="top:34.4px">2 days ago</div><div class="dom" style="top:67.1px;letter-spacing:0"><span style="letter-spacing:-0.111px">emergencyalert.saskatchewan.ca</span></div></div>
<div class="card" style="left:1009.3px;top:546.1px"><div class="img"><svg width="128.5" height="133.9" style="display:block" viewBox="0 0 128 134" preserveAspectRatio="none"><rect width="128" height="134" fill="#cdd0d8"/><g transform="translate(0,.7)"><path d="M32.3 35.7 L72 75.8 L-8 75.8Z" fill="#d5d8df"/><path d="M46.4 42.7 L81.1 75.8 L12 75.8Z" fill="#e1e3e8"/><path d="M9.4 54 L31.4 75.8 L-12.6 75.8Z" fill="#f1f2f6"/></g><text x="-6.3" y="97.7" font-family="Liberation Sans, sans-serif" font-weight="bold" font-size="8.4" letter-spacing=".45" fill="#e6e8ee">NO IMAGE FOUND</text></svg></div><div class="ti" style="letter-spacing:0"><span style="letter-spacing:-0.109px">Emergency Alerts</span></div><div class="ago" style="top:34.4px">3 days ago</div><div class="dom" style="top:67.1px;letter-spacing:0"><span style="letter-spacing:-0.111px">emergencyalert.saskatchewan.ca</span></div></div>
<div class="card" style="left:249.6px;top:693px"><div class="img"><svg width="128.5" height="133.9" style="display:block" viewBox="0 0 128 134" preserveAspectRatio="none"><rect width="128" height="134" fill="#cdd0d8"/><g transform="translate(0,.7)"><path d="M32.3 35.7 L72 75.8 L-8 75.8Z" fill="#d5d8df"/><path d="M46.4 42.7 L81.1 75.8 L12 75.8Z" fill="#e1e3e8"/><path d="M9.4 54 L31.4 75.8 L-12.6 75.8Z" fill="#f1f2f6"/></g><text x="-6.3" y="97.7" font-family="Liberation Sans, sans-serif" font-weight="bold" font-size="8.4" letter-spacing=".45" fill="#e6e8ee">NO IMAGE FOUND</text></svg></div><div class="ti" style="letter-spacing:0"><span style="letter-spacing:-0.109px">Emergency Alerts</span></div><div class="ago" style="top:34.4px">3 days ago</div><div class="dom" style="top:67.1px;letter-spacing:0"><span style="letter-spacing:-0.111px">emergencyalert.saskatchewan.ca</span></div></div>
<div class="card" style="left:629.4px;top:693px"><div class="img"><svg width="128.5" height="133.9" style="display:block" viewBox="0 0 128 134" preserveAspectRatio="none"><rect width="128" height="134" fill="#cdd0d8"/><g transform="translate(0,.7)"><path d="M32.3 35.7 L72 75.8 L-8 75.8Z" fill="#d5d8df"/><path d="M46.4 42.7 L81.1 75.8 L12 75.8Z" fill="#e1e3e8"/><path d="M9.4 54 L31.4 75.8 L-12.6 75.8Z" fill="#f1f2f6"/></g><text x="-6.3" y="97.7" font-family="Liberation Sans, sans-serif" font-weight="bold" font-size="8.4" letter-spacing=".45" fill="#e6e8ee">NO IMAGE FOUND</text></svg></div><div class="ti" style="letter-spacing:0"><span style="letter-spacing:-0.109px">Emergency Alerts</span></div><div class="ago" style="top:34.4px">2 days ago</div><div class="dom" style="top:67.1px;letter-spacing:0"><span style="letter-spacing:-0.111px">emergencyalert.saskatchewan.ca</span></div></div>
<div class="card" style="left:1009.3px;top:693px"><div class="img"><svg width="128.5" height="133.9" style="display:block" viewBox="0 0 128 134" preserveAspectRatio="none"><rect width="128" height="134" fill="#cdd0d8"/><g transform="translate(0,.7)"><path d="M32.3 35.7 L72 75.8 L-8 75.8Z" fill="#d5d8df"/><path d="M46.4 42.7 L81.1 75.8 L12 75.8Z" fill="#e1e3e8"/><path d="M9.4 54 L31.4 75.8 L-12.6 75.8Z" fill="#f1f2f6"/></g><text x="-6.3" y="97.7" font-family="Liberation Sans, sans-serif" font-weight="bold" font-size="8.4" letter-spacing=".45" fill="#e6e8ee">NO IMAGE FOUND</text></svg></div><div class="ti" style="letter-spacing:0"><span style="letter-spacing:-0.109px">Emergency Alerts</span></div><div class="ago" style="top:34.4px">3 days ago</div><div class="dom" style="top:67.1px;letter-spacing:0"><span style="letter-spacing:-0.111px">emergencyalert.saskatchewan.ca</span></div></div>
<!--/MAIN-->
<!--FLOAT-->
<div class="abs" style="left:1334px;top:762.5px;width:40.3px;height:40.3px;border-radius:50%;background:#0963da;box-shadow:0 1px 4px rgba(0,60,160,.15)"></div>
<svg class="abs" style="left:1334px;top:762.5px" width="40.3" height="40.3" viewBox="0 0 40.3 40.3"><g fill="none" stroke="#d3e6ff" stroke-width="1.4" stroke-linejoin="round" stroke-linecap="round"><circle cx="20.1" cy="9.2" r="1.35"/><path d="M20.1 10.6 V13.8"/><path d="M12.4 13.8 H27.7 Q29.7 13.8 29.7 15.8 V26.9 Q29.7 28.9 27.7 28.9 H17.3 L13.3 32.6 L12.9 28.9 H12.4 Q10.4 28.9 10.4 26.9 V15.8 Q10.4 13.8 12.4 13.8Z"/><path d="M10.2 18.6 Q6.8 18.8 6.8 21.7 Q6.8 24.6 10.2 24.8"/><path d="M29.9 18.6 Q33.3 18.8 33.3 21.7 Q33.3 24.6 29.9 24.8"/><circle cx="15.3" cy="20.3" r="1.35"/><circle cx="24.9" cy="20.3" r="1.35"/><path d="M17.9 23.2 Q20.1 25.6 22.4 23.2"/></g></svg>
<div class="abs" style="left:1354.2px;top:758.1px;width:22.8px;height:9.8px;border-radius:4px;background:#f2c452"></div>
<div class="t" style="left:1354.2px;top:760.1px;width:22.8px;text-align:center;font-size:6.9px;letter-spacing:-.1px;font-weight:bold;color:#4a4838">NEW</div>
<div class="abs" style="left:1331.6px;top:813.2px;width:45px;height:45px;border-radius:50%;background:#fff;box-shadow:0 1px 4px rgba(40,60,100,.12)"></div>
<div class="abs" style="left:1334px;top:815.6px;width:40.4px;height:40.2px;border-radius:50%;background:#2f4f7d"></div>
<div class="t" style="left:1334px;top:827.6px;width:40.4px;text-align:center;font-size:16.5px;font-weight:bold;color:#fff">?</div>
<!--/FLOAT-->
</body></html>
